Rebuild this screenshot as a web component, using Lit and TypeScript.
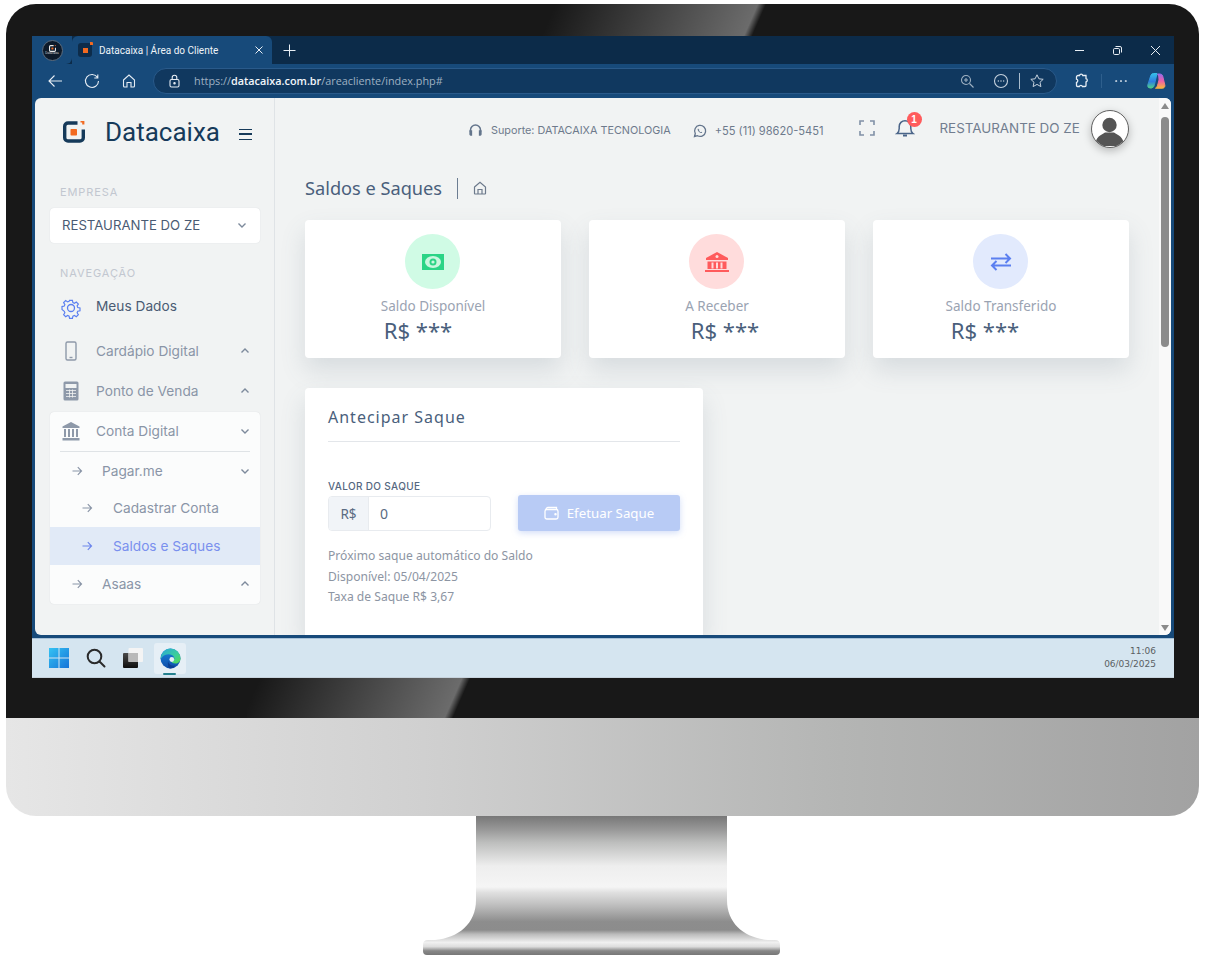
import { LitElement, html, css } from "lit";
import { customElement } from "lit/decorators.js";

const chevDown = html`<svg class="chev" viewBox="0 0 12 12"><path d="M2.500 4.500 6 8l3.500-3.500"/></svg>`;
const chevUp = html`<svg class="chev" viewBox="0 0 12 12"><path d="M2.500 7.500 6 4l3.500 3.500"/></svg>`;
const arrow = html`<svg class="arrow" viewBox="0 0 12 12"><path d="M1.500 6h9M6.800 2.200 10.500 6 6.800 9.800"/></svg>`;
const logoMark = html`<svg class="logomark" viewBox="0 0 22 22"><path d="M14.500 2H5A3.300 3.300 0 0 0 1.700 5.300v11.400A3.300 3.300 0 0 0 5 20h12a3.300 3.300 0 0 0 3.300-3.300V8.500" fill="none" stroke="#163a5a" stroke-width="3.400"/><rect x="7.500" y="8" width="6.500" height="6.500" rx=".8" fill="#f26a21"/><path d="M17.500 .3h2.800v3.200" fill="none" stroke="#f26a21" stroke-width="2.200"/></svg>`;

@customElement("app-root")
export class AppRoot extends LitElement {
  static styles = css`
    :host { display: block; width: 1205px; height: 959px; background: #fff; font-family: Inter, "Noto Sans", sans-serif; overflow: hidden; }
    * { box-sizing: border-box; }
    svg { display: block; flex: none; }
    .monitor { display: flex; flex-direction: column; width: 1193px; margin: 0 0 0 6px; padding-top: 4px; }
    .bezel { position: relative; width: 100%; height: 714px; background: #181818; border-radius: 30px 30px 0 0; padding: 32px 25px 40px 26px; overflow: hidden; }
    .gloss { position: absolute; left: 241px; top: 0; width: 520px; height: 714px; background: linear-gradient(113.7deg, rgba(255,255,255,0) 37%, rgba(255,255,255,.36) 61.300%, rgba(255,255,255,0) 62.300%); }
    .chin { width: 100%; height: 98px; border-radius: 0 0 30px 30px; background: linear-gradient(90deg, #e6e6e6 0%, #d0d0d0 35%, #b4b5b4 70%, #a2a2a2 100%); }
    .stand { width: 357px; height: 140px; margin-left: 417px; }

    .screen { position: relative; z-index: 1; height: 642px; display: flex; flex-direction: column; background: #174a7a; }
    .tabbar { height: 28px; flex: none; display: flex; align-items: stretch; background: #0c2b49; color: #fff; }
    .profile { width: 40px; display: flex; align-items: center; justify-content: center; background: #174a7a; border-radius: 0 0 6px 0; }
    .profile-dot { width: 21px; height: 21px; border-radius: 50%; background: #0d1a2a; border: 1px solid #5c6b7c; display: flex; flex-direction: column; align-items: center; justify-content: center; }
    .profile-dot svg { width: 7px; height: 7px; margin: 0; }
    .profile-dot span { font-size: 3px; line-height: 3px; color: #ddd; font-family: "Liberation Sans", sans-serif; }
    .profile-dot .logomark path:first-child { stroke: #e8e8e8; }
    .tab { width: 200px; background: #174a7a; border-radius: 6px 6px 0 0; display: flex; align-items: center; padding: 0 8px 0 6px; font: 10px/1 Roboto, sans-serif; color: #eef3f8; }
    .fav { position: relative; width: 14px; height: 14px; background: #0d2c4a; border-radius: 3px; display: flex; align-items: center; justify-content: center; margin-right: 7px; }
    .fav i { width: 5px; height: 5px; background: #f26a21; display: block; }
    .fav b { position: absolute; top: -1px; right: -1px; width: 3px; height: 3px; background: #f26a21; border-radius: 0 1px 0 0; }
    .tab-title { flex: 1; white-space: nowrap; padding-top: 1px; }
    .tab svg, .newtab svg, .win svg { stroke: #e8eef4; fill: none; stroke-width: 1; }
    .newtab { margin-left: 11px; display: flex; align-items: center; }
    .spacer { flex: 1; }
    .win { display: flex; align-items: center; gap: 25px; padding-right: 12px; }

    .navbar { height: 34px; flex: none; display: flex; align-items: center; padding: 0 8px 0 15px; }
    .navbtns { display: flex; gap: 21px; align-items: center; width: 106px; }
    .navbtns svg, .pill svg, .tools svg { fill: none; stroke: #e6edf4; stroke-width: 1.100; }
    .pill { width: 904px; height: 26px; border-radius: 13px; background: #10385f; border: 1px solid #2a5a8a; display: flex; align-items: center; padding: 0 11px 0 14px; font: 10.850px/1 "Open Sans", sans-serif; color: #9fb1c2; }
    .pill .lock { margin-right: 13px; }
    .pill b { font-weight: 600; color: #f2f6fa; }
    .url { flex: 1; white-space: nowrap; }
    .pill .r1 { margin-right: 19px; stroke: #9fb1c2; }
    .pill .r2 { margin-right: 10px; stroke: #c6d2de; }
    .pill .star { stroke: #c6d2de; stroke-width: 1; }
    .vsep { width: 1px; height: 16px; background: #a9bccd; margin-right: 9px; }
    .tools { flex: 1; display: flex; align-items: center; padding: 0 0 0 16px; }
    .tools .puzzle { stroke-width: 1.300; }
    .tools .vsep2 { width: 1px; height: 14px; background: #2e5f8d; margin-left: 12px; }
    .tools .dots { margin-left: 12px; stroke-linecap: round; }
    .tools .copilot { margin-left: 18px; }

    .page { height: 537px; flex: none; margin: 0 3px; border-radius: 6px; background: #f1f3f3; display: flex; overflow: hidden; position: relative; }
    .frame-bot { height: 3px; flex: none; }

    .side { width: 240px; flex: none; border-right: 1px solid #dfe3e6; padding: 21px 14px 0 15px; color: #8a95a7; font-size: 13.700px; }
    .brand { display: flex; align-items: center; height: 26px; padding-left: 13px; }
    .logomark { width: 22px; height: 22px; margin-right: 20px; }
    .wordmark { font: 400 26px/26px Roboto, sans-serif; color: #163a5a; width: 134px; white-space: nowrap; }
    .burger { width: 13px; height: 11px; border-top: 1.500px solid #163a5a; border-bottom: 1.500px solid #163a5a; position: relative; margin-top: 5px; }
    .burger::after { content: ""; position: absolute; left: 0; right: 0; top: 3.200px; height: 1.500px; background: #163a5a; }
    .sec { font-size: 11px; line-height: 14px; letter-spacing: .9px; color: #c2c7d0; padding-left: 10px; font-weight: 400; }
    .sec.a { margin-top: 40px; }
    .sec.b { margin-top: 23px; }
    .select { height: 35px; margin-top: 9px; background: #fff; border-radius: 4px; box-shadow: 0 0 1px rgba(120,130,140,.3); display: flex; align-items: center; justify-content: space-between; padding: 0 12px 2px 12px; color: #4a5b73; font-size: 13.200px; }
    .chev { width: 12px; height: 12px; fill: none; stroke: #7d8a9c; stroke-width: 1.400; }
    .arrow { width: 12px; height: 12px; fill: none; stroke: #8a95a7; stroke-width: 1.200; }
    .item { display: flex; align-items: center; height: 40px; padding-left: 10px; white-space: nowrap; }
    .item .ic { width: 22px; height: 22px; margin-right: 14px; }
    .item .lab { flex: 1; }
    .item .chev { margin: 0 9px 0 0; }
    .meus { color: #4a5b73; height: 36px; margin-top: 6px; margin-bottom: 9px; align-items: flex-start; padding-top: 12px; }
    .meus .ic { margin-top: -1px; }
    .nav-box { background: #fbfcfc; border-radius: 4px; height: 192px; margin-top: 1px; box-shadow: 0 0 1px rgba(120,130,140,.3); overflow: hidden; }
    .nav-box .top { height: 39px; padding-bottom: 1px; }
    .nav-box hr { margin: 0 10px; border: 0; border-top: 1px solid #dfe3e6; height: 1px; }
    .sub { display: flex; align-items: center; height: 38px; white-space: nowrap; }
    .sub.l1 { padding-left: 21px; }
    .sub.l2 { padding-left: 31px; }
    .sub.short { height: 37px; }
    .sub .arrow { margin-right: 20px; }
    .sub.l1 .arrow { margin-right: 19px; }
    .sub .lab { flex: 1; }
    .sub .chev { margin-right: 9px; }
    .sub.active { background: #e1eaf7; color: #7a90ee; }
    .sub.active .arrow { stroke: #6d86ec; }

    .main { flex: 1; min-width: 0; padding: 0 30px; display: flex; flex-direction: column; overflow: hidden; }
    .topbar { height: 60px; flex: none; display: flex; align-items: center; padding-top: 1px; font-size: 10.800px; color: #6e7a8c; position: relative; }
    .tb-ic { fill: none; stroke: #64758c; stroke-width: 1.300; }
    .sup { display: flex; align-items: center; gap: 8px; margin-left: 163px; margin-top: 4px; white-space: nowrap; }
    .sup.w { margin-left: 22px; }
    .phone { font-size: 11.100px; }
    .expand { margin-left: 35px; margin-top: -1px; }
    .bell { margin-left: 20px; position: relative; width: 20px; height: 20px; margin-top: -1px; }
    .badge { position: absolute; top: -6px; right: -7px; width: 15px; height: 15px; border-radius: 50%; background: #ff5b5c; color: #fff; font: 700 10px/15px "Liberation Sans", sans-serif; text-align: center; }
    .user { margin-left: 25px; font-size: 13.400px; color: #717d8f; white-space: nowrap; margin-top: -1px; }
    .avatar { position: absolute; right: 0; top: 12px; width: 38px; height: 38px; border-radius: 50%; background: #fff; border: 1.500px solid #616161; box-shadow: 0 3px 8px rgba(0,0,0,.25); overflow: hidden; }
    .crumb { margin-top: 19px; height: 22px; display: flex; align-items: center; font-size: 18.200px; color: #4a5f7c; flex: none; font-family: "Noto Sans", sans-serif; white-space: nowrap; }
    .crumb .bar { width: 1px; height: 21px; background: #6c7d92; margin: 0 15px; }
    .cards { display: grid; grid-template-columns: repeat(3, 256px); column-gap: 28px; margin-top: 21px; flex: none; }
    .card { height: 138px; background: #fff; border-radius: 4px; box-shadow: 0 12px 24px rgba(90,105,125,.17); display: flex; flex-direction: column; align-items: center; padding-top: 14px; }
    .circle { width: 55px; height: 55px; border-radius: 50%; display: flex; align-items: center; justify-content: center; margin-right: 1px; }
    .green { background: #d0fbe5; }
    .red { background: #ffdcdc; }
    .blue { background: #e2eafd; }
    .lbl { margin-top: 9px; font: 400 13.500px/17px "Noto Sans", sans-serif; color: #9aa3b2; white-space: nowrap; }
    .val { margin-top: 2px; font: 400 22px/27px "Noto Sans", sans-serif; color: #4a5f7c; white-space: nowrap; }
    .val.s1 { margin-right: 30px; }
    .val.s2 { margin-left: 16px; }
    .val.s3 { margin-right: 32px; }
    .panel { margin-top: 30px; width: 398px; flex: 1; background: #fff; border-radius: 4px 4px 0 0; box-shadow: 0 12px 24px rgba(90,105,125,.17); padding: 0 23px; font-family: "Noto Sans", sans-serif; }
    .panel h2 { margin: 0; height: 54px; border-bottom: 1px solid #e3e6ea; font: 400 16px/58px "Noto Sans", sans-serif; letter-spacing: 1px; color: #4a5f7c; }
    .field-l { margin-top: 37px; font: 500 10px/14px Inter, sans-serif; color: #55677f; letter-spacing: .35px; }
    .frow { display: flex; justify-content: space-between; align-items: flex-start; margin-top: 2px; }
    .igroup { width: 163px; height: 35px; display: flex; border: 1px solid #e8ebef; border-radius: 4px; font-size: 14px; color: #5a6b82; overflow: hidden; margin-top: 1px; }
    .addon { width: 40px; background: #f1f4f8; border-right: 1px solid #e8ebef; display: flex; align-items: center; justify-content: center; font-size: 13.500px; }
    .ival { padding-left: 11px; display: flex; align-items: center; }
    .btn { width: 162px; height: 36px; background: #b8cbf5; border-radius: 3px; box-shadow: 0 2px 6px rgba(130,160,235,.35); color: #fff; display: flex; align-items: center; justify-content: center; gap: 8px; font-size: 13.300px; }
    .help { margin-top: 15px; font-size: 12.100px; line-height: 20.500px; color: #8d95a3; }

    .scroll { width: 12px; flex: none; background: #f9f9f9; display: flex; flex-direction: column; align-items: center; justify-content: space-between; padding: 5px 0 4px; position: relative; }
    .tri-u { width: 0; height: 0; border: 4.500px solid transparent; border-top: 0; border-bottom: 6px solid #8b8b8b; }
    .tri-d { width: 0; height: 0; border: 4.500px solid transparent; border-bottom: 0; border-top: 6px solid #8b8b8b; }
    .thumb { position: absolute; left: 2px; top: 19px; width: 8px; height: 230px; border-radius: 4px; background: #8b8b8b; }

    .taskbar { height: 40px; flex: none; background: #d5e5f0; border-top: 1px solid #a8c2d8; border-bottom: 1px solid #c7d3dd; display: flex; align-items: center; padding: 0 18px 0 17px; }
    .tk { display: flex; align-items: center; margin-left: 17px; }
    .tk.first { margin-left: 0; }
    .tile { width: 32px; height: 31px; background: #e6eff6; border-radius: 3px; margin-left: 11px; display: flex; align-items: center; justify-content: center; position: relative; }
    .tile::after { content: ""; position: absolute; left: 9px; bottom: -1px; width: 13px; height: 2px; border-radius: 1px; background: #24808e; }
    .clock { margin-left: auto; text-align: right; font: 9px/13.500px "DejaVu Sans", sans-serif; color: #5a5f63; }
  `;

  render() {
    return html`
      <div class="monitor">
        <div class="bezel">
          <div class="gloss"></div>
          <div class="screen">
            <div class="tabbar">
              <div class="profile"><div class="profile-dot">${logoMark}<span>Datacaixa</span></div></div>
              <div class="tab">
                <div class="fav"><i></i><b></b></div>
                <div class="tab-title">Datacaixa | Área do Cliente</div>
                <svg width="10" height="10" viewBox="0 0 10 10"><path d="M1.500 1.500l7 7M8.500 1.500l-7 7"/></svg>
              </div>
              <div class="newtab"><svg width="13" height="13" viewBox="0 0 13 13"><path d="M6.500 .5v12M.5 6.500h12"/></svg></div>
              <div class="spacer"></div>
              <div class="win">
                <svg width="13" height="13" viewBox="0 0 13 13"><path d="M2 6.500h9"/></svg>
                <svg width="13" height="13" viewBox="0 0 13 13"><rect x="2.500" y="4.500" width="6" height="6" rx="1.200"/><path d="M4.500 2.500H9A1.500 1.500 0 0 1 10.500 4v4.500"/></svg>
                <svg width="13" height="13" viewBox="0 0 13 13"><path d="M2 2l9 9M11 2l-9 9"/></svg>
              </div>
            </div>
            <div class="navbar">
              <div class="navbtns">
                <svg width="16" height="16" viewBox="0 0 16 16"><path d="M15 8H2M7.500 2.500 2 8l5.500 5.500"/></svg>
                <svg width="16" height="16" viewBox="0 0 16 16"><path d="M13.500 4.500A6.500 6.500 0 1 0 14.500 8M13.800 1.500v3.500h-3.500"/></svg>
                <svg width="16" height="16" viewBox="0 0 16 16"><path d="M2.500 7 8 2l5.500 5v6a1 1 0 0 1-1 1H10V9.500H6V14H3.500a1 1 0 0 1-1-1z"/></svg>
              </div>
              <div class="pill">
                <svg class="lock" width="13" height="14" viewBox="0 0 13 14"><rect x="2" y="5.500" width="9" height="7.500" rx="1.500"/><path d="M4.200 5.500V3.500a2.300 2.300 0 0 1 4.600 0v2"/><circle cx="6.500" cy="9.200" r=".7" fill="#e6edf4"/></svg>
                <div class="url">https://<b>datacaixa.com.br</b>/areacliente/index.php#</div>
                <svg class="r1" width="14" height="14" viewBox="0 0 14 14"><circle cx="6" cy="6" r="4.500"/><path d="M9.500 9.500l4 4M4 6h4M6 4v4"/></svg>
                <svg class="r2" width="16" height="16" viewBox="0 0 16 16"><circle cx="8" cy="8" r="6.500"/><path d="M4.800 8h1M7.500 8h1M10.200 8h1" stroke-width="1.400"/></svg>
                <div class="vsep"></div>
                <svg class="star" width="16" height="16" viewBox="0 0 16 16"><path d="M8 1.800l1.900 4 4.300.5-3.200 3 .9 4.300L8 11.400l-3.900 2.200.9-4.300-3.200-3 4.300-.5z"/></svg>
              </div>
              <div class="tools">
                <svg class="puzzle" width="16" height="16" viewBox="0 0 16 16"><path d="M6.500 2.500a1.700 1.700 0 0 1 3.300 0H13v3.200a1.700 1.700 0 0 1 0 3.300V12.500a1 1 0 0 1-1 1H9.500a1.700 1.700 0 0 0-3.200 0H4.500a1 1 0 0 1-1-1V9.500a1.700 1.700 0 0 0 0-3.300V4a1.500 1.500 0 0 1 1.500-1.500z"/></svg>
                <div class="vsep2"></div>
                <svg class="dots" width="14" height="14" viewBox="0 0 14 14"><path d="M2 7h.4M6.800 7h.4M11.600 7h.4" stroke-width="1.700"/></svg>
                <svg class="copilot" width="20" height="20" viewBox="0 0 20 20">
                  <defs>
                    <linearGradient id="cp1" x1="0" y1="0" x2="0" y2="1"><stop offset="0" stop-color="#35bfe8"/><stop offset=".55" stop-color="#2f7de0"/><stop offset="1" stop-color="#4fd08a"/></linearGradient>
                    <linearGradient id="cp2" x1="0" y1="0" x2="0" y2="1"><stop offset="0" stop-color="#9a6be8"/><stop offset=".5" stop-color="#ee5fa8"/><stop offset="1" stop-color="#f9b63c"/></linearGradient>
                  </defs>
                  <path d="M7.500 2.500h3.500L8.500 13.500a4 4 0 0 1-3 3.500H4A2.500 2.500 0 0 1 1.800 14L4.800 4.500A3 3 0 0 1 7.500 2.500z" fill="url(#cp1)" stroke="url(#cp1)" stroke-width="1" stroke-linejoin="round"/>
                  <path d="M11.500 3H14a3 3 0 0 1 2.700 2L18.800 14a2.500 2.500 0 0 1-2.300 3.200H9.500c1.500-.8 2-2.500 2.500-4.500L13 9C13 6 12.500 4 11.500 3z" fill="url(#cp2)" stroke="url(#cp2)" stroke-width="1" stroke-linejoin="round"/>
                </svg>
              </div>
            </div>
            <div class="page">
              <aside class="side">
                <div class="brand">
                  ${logoMark}
                  <div class="wordmark">Datacaixa</div>
                  <div class="burger"></div>
                </div>
                <div class="sec a">EMPRESA</div>
                <div class="select"><span>RESTAURANTE DO ZE</span>${chevDown}</div>
                <div class="sec b">NAVEGAÇÃO</div>
                <div class="item meus">
                  <svg class="ic" viewBox="0 0 22 22" fill="none" stroke="#5b7ff0" stroke-width="1.300"><circle cx="11" cy="11" r="3.500"/><path d="M9.400 2.500h3.200l.5 2.500 1.700.7 2.100-1.400 2.300 2.300-1.400 2.100.7 1.700 2.500.5v3.200l-2.500.5-.7 1.700 1.400 2.100-2.300 2.300-2.100-1.400-1.700.7-.5 2.500H9.400l-.5-2.500-1.700-.7-2.100 1.400-2.300-2.300 1.400-2.100-.7-1.700L1 12.600V9.400l2.500-.5.700-1.700L2.800 5.100l2.300-2.300 2.100 1.400 1.700-.7z" transform="translate(1.100 1.100) scale(.9)"/></svg>
                  <span class="lab">Meus Dados</span>
                </div>
                <div class="item">
                  <svg class="ic" viewBox="0 0 22 22" fill="none" stroke="#8e99a9" stroke-width="1.400"><rect x="6" y="2" width="10" height="18" rx="1.500"/><path d="M9.500 17.500h3" /></svg>
                  <span class="lab">Cardápio Digital</span>${chevUp}
                </div>
                <div class="item">
                  <svg class="ic" viewBox="0 0 22 22"><rect x="3.500" y="1.500" width="15" height="19" rx="1.500" fill="#8e99a9"/><rect x="5.500" y="4" width="11" height="4" fill="#f1f3f3"/><path d="M6 10.500h10M6 13.500h10M6 16.500h10M9.500 9.500v8M12.500 9.500v8" stroke="#f1f3f3" stroke-width=".8"/></svg>
                  <span class="lab">Ponto de Venda</span>${chevUp}
                </div>
                <div class="nav-box">
                  <div class="item top">
                    <svg class="ic" viewBox="0 0 22 22" fill="#8e99a9"><path d="M11 2 2.500 6.500V8h17V6.500z"/><path d="M4 9h2v8H4zM8 9h2v8H8zM12 9h2v8h-2zM16 9h2v8h-2z" /><path d="M2.500 18h17v2.500h-17z"/></svg>
                    <span class="lab">Conta Digital</span>${chevDown}
                  </div>
                  <hr />
                  <div class="sub l1 short">${arrow}<span class="lab">Pagar.me</span>${chevDown}</div>
                  <div class="sub l2">${arrow}<span class="lab">Cadastrar Conta</span></div>
                  <div class="sub l2 active">${arrow}<span class="lab">Saldos e Saques</span></div>
                  <div class="sub l1">${arrow}<span class="lab">Asaas</span>${chevUp}</div>
                </div>
              </aside>
              <main class="main">
                <div class="topbar">
                  <div class="sup">
                    <svg class="tb-ic" width="15" height="15" viewBox="0 0 15 15"><path d="M2.500 9V7a5 5 0 0 1 10 0v2" stroke-width="1.500"/><path d="M2 8h1.500v4H2.500A1 1 0 0 1 2 11zM11.500 8H13v3a1 1 0 0 1-.5 1h-1z" fill="#64758c"/></svg>
                    <span>Suporte: DATACAIXA TECNOLOGIA</span>
                  </div>
                  <div class="sup w">
                    <svg class="tb-ic" width="14" height="14" viewBox="0 0 14 14"><path d="M1.500 12.500l.8-3A5.500 5.500 0 1 1 4.500 11.700z"/><path d="M5 4.500c-.7.8-.3 2 .8 3.200S8.500 9.500 9.300 8.800l-1-1-.8.400-1.500-1.500.4-.8z" fill="#64758c" stroke="none"/></svg>
                    <span class="phone">+55 (11) 98620-5451</span>
                  </div>
                  <svg class="expand tb-ic" width="16" height="16" viewBox="0 0 16 16" style="stroke:#8090a6;stroke-width:1.600"><path d="M1 5V1h4M11 1h4v4M15 11v4h-4M5 15H1v-4"/></svg>
                  <div class="bell">
                    <svg width="20" height="20" viewBox="0 0 20 20" fill="none" stroke="#4a6488" stroke-width="1.500"><path d="M2 15.500c1.500-1 2.200-2.500 2.200-5V8.500a5.800 5.800 0 0 1 11.600 0v2c0 2.500.7 4 2.200 5z"/><path d="M8 17.500h4" stroke-width="2.200"/></svg>
                    <div class="badge">1</div>
                  </div>
                  <div class="user">RESTAURANTE DO ZE</div>
                  <div class="avatar">
                    <svg width="35" height="35" viewBox="0 0 35 35" fill="#555"><circle cx="17.500" cy="14" r="7.200"/><path d="M3 35c0-9 6-11 10-13.500h9C26 24 32 26 32 35z"/></svg>
                  </div>
                </div>
                <div class="crumb">
                  <span>Saldos e Saques</span><div class="bar"></div>
                  <svg width="14" height="14" viewBox="0 0 14 14" fill="none" stroke="#6d7a8c" stroke-width="1.200"><path d="M1.500 6 7 1.200 12.500 6v6.500a.5.5 0 0 1-.5.500H2a.5.5 0 0 1-.5-.5z"/><path d="M5 13V8.500h4V13"/></svg>
                </div>
                <div class="cards">
                  <div class="card">
                    <div class="circle green"><svg width="22" height="16" viewBox="0 0 22 16"><rect width="22" height="16" fill="#2bd486"/><ellipse cx="11" cy="8" rx="8" ry="6" fill="#c9f7df"/><circle cx="11" cy="8" r="3.500" fill="#2bd486"/><circle cx="11" cy="8" r="1.600" fill="#c9f7df"/></svg></div>
                    <div class="lbl">Saldo Disponível</div>
                    <div class="val s1">R$ ***</div>
                  </div>
                  <div class="card">
                    <div class="circle red"><svg width="24" height="20" viewBox="0 0 24 20" fill="#ff5b5c"><path d="M12 0 1 6v2h22V6z"/><path d="M2.500 9.500h19V17h-19zM0 18h24v2H0z"/><path d="M6.500 10.500h2v6h-2zM11 10.500h2v6h-2zM15.500 10.500h2v6h-2z" fill="#ffdcdc"/><circle cx="12" cy="4.500" r="1.500" fill="#ffdcdc"/></svg></div>
                    <div class="lbl">A Receber</div>
                    <div class="val s2">R$ ***</div>
                  </div>
                  <div class="card">
                    <div class="circle blue"><svg width="22" height="18" viewBox="0 0 22 18" fill="none" stroke="#5b7ff0" stroke-width="2"><path d="M1 5.500h19M15.500 1 20 5.500 15.500 10" /><path d="M21 12.500H2M6.500 8 2 12.500 6.500 17"/></svg></div>
                    <div class="lbl">Saldo Transferido</div>
                    <div class="val s3">R$ ***</div>
                  </div>
                </div>
                <div class="panel">
                  <h2>Antecipar Saque</h2>
                  <div class="field-l">VALOR DO SAQUE</div>
                  <div class="frow">
                    <div class="igroup"><div class="addon">R$</div><div class="ival">0</div></div>
                    <div class="btn">
                      <svg width="15" height="14" viewBox="0 0 15 14" fill="none" stroke="#fff" stroke-width="1.300"><path d="M2 3.500A2 2 0 0 1 4 1.500h8.500v2"/><rect x="1" y="3.500" width="13" height="9.500" rx="1.800"/><circle cx="11.500" cy="8.300" r=".6" fill="#fff"/></svg>
                      <span>Efetuar Saque</span>
                    </div>
                  </div>
                  <div class="help">Próximo saque automático do Saldo<br />Disponível: 05/04/2025<br />Taxa de Saque R$ 3,67</div>
                </div>
              </main>
              <div class="scroll"><div class="tri-u"></div><div class="thumb"></div><div class="tri-d"></div></div>
            </div>
            <div class="frame-bot"></div>
            <div class="taskbar">
              <div class="tk first">
                <svg width="20" height="20" viewBox="0 0 20 20"><defs><linearGradient id="wn" x1="0" y1="0" x2="1" y2="1"><stop offset="0" stop-color="#35c3f3"/><stop offset="1" stop-color="#1573d8"/></linearGradient></defs><path d="M0 0h9.500v9.500H0zM10.500 0H20v9.500h-9.500zM0 10.500h9.500V20H0zM10.500 10.500H20V20h-9.500z" fill="url(#wn)"/></svg>
              </div>
              <div class="tk"><svg width="20" height="20" viewBox="0 0 20 20" fill="none" stroke="#2a2a2a" stroke-width="2"><circle cx="8.500" cy="8.500" r="6.800"/><path d="M13.500 13.500l5 5" stroke-linecap="round"/></svg></div>
              <div class="tk"><svg width="20" height="20" viewBox="0 0 20 20"><defs><linearGradient id="tv" x1="0" y1="0" x2="0" y2="1"><stop offset="0" stop-color="#4a4a4a"/><stop offset="1" stop-color="#0e0e0e"/></linearGradient></defs><rect y="5" width="15" height="15" rx="1" fill="url(#tv)"/><rect x="5.500" width="14.500" height="14" rx="1" fill="#f4f4f4"/><rect x="5.500" y="5" width="9.500" height="9" fill="#b9b9b9"/></svg></div>
              <div class="tile">
                <svg width="21" height="21" viewBox="0 0 21 21"><defs><linearGradient id="eg1" x1="0" y1="0" x2="1" y2="1"><stop offset="0" stop-color="#2aa5dc"/><stop offset=".6" stop-color="#3bcf9a"/><stop offset="1" stop-color="#58d94c"/></linearGradient><linearGradient id="eg2" x1="0" y1="0" x2="0" y2="1"><stop offset="0" stop-color="#1a86e0"/><stop offset="1" stop-color="#0f4da8"/></linearGradient></defs><circle cx="10.500" cy="10.500" r="10" fill="url(#eg2)"/><path d="M10.500 .5A10 10 0 0 1 20.500 10.500C20.500 14 18 15.500 15.500 15.500 13 15.500 11.500 14.500 11.500 13.500 14 13 15 11 14 9 12.500 6 8 5.500 5 7 3 8 1.500 9.500.7 11 1 5 5 .5 10.500 .5Z" fill="url(#eg1)"/><circle cx="11.800" cy="11.500" r="2.400" fill="#e6eff6"/><path d="M8 13c.5 3.500 4 5.500 7.500 4.500-1.500 1.800-3.500 3-5.500 3-1.500 0-2.500-3-2-7.500z" fill="#0c3f92"/></svg>
              </div>
              <div class="clock">11:06<br />06/03/2025</div>
            </div>
          </div>
        </div>
        <div class="chin"></div>
        <svg class="stand" viewBox="0 0 357 140">
          <defs>
            <linearGradient id="st" x1="0" y1="0" x2="0" y2="1">
              <stop offset="0" stop-color="#777"/><stop offset=".1" stop-color="#999"/><stop offset=".19" stop-color="#bdbebd"/><stop offset=".36" stop-color="#eee"/><stop offset=".51" stop-color="#f5f5f5"/><stop offset=".55" stop-color="#e0e0e0"/><stop offset=".65" stop-color="#bbb"/><stop offset=".76" stop-color="#8d8d8d"/><stop offset=".82" stop-color="#8c8c8c"/><stop offset=".85" stop-color="#bbb"/><stop offset=".91" stop-color="#f0f0f0"/><stop offset=".94" stop-color="#ddd"/><stop offset=".97" stop-color="#888"/><stop offset="1" stop-color="#777"/>
            </linearGradient>
          </defs>
          <path d="M53 0H304V84C304 108 322 122 345 124H352Q357 124 357 129V135Q357 139 353 139H4Q0 139 0 135V129Q0 124 5 124H12C35 122 53 108 53 84Z" fill="url(#st)"/>
        </svg>
      </div>
    `;
  }
}
